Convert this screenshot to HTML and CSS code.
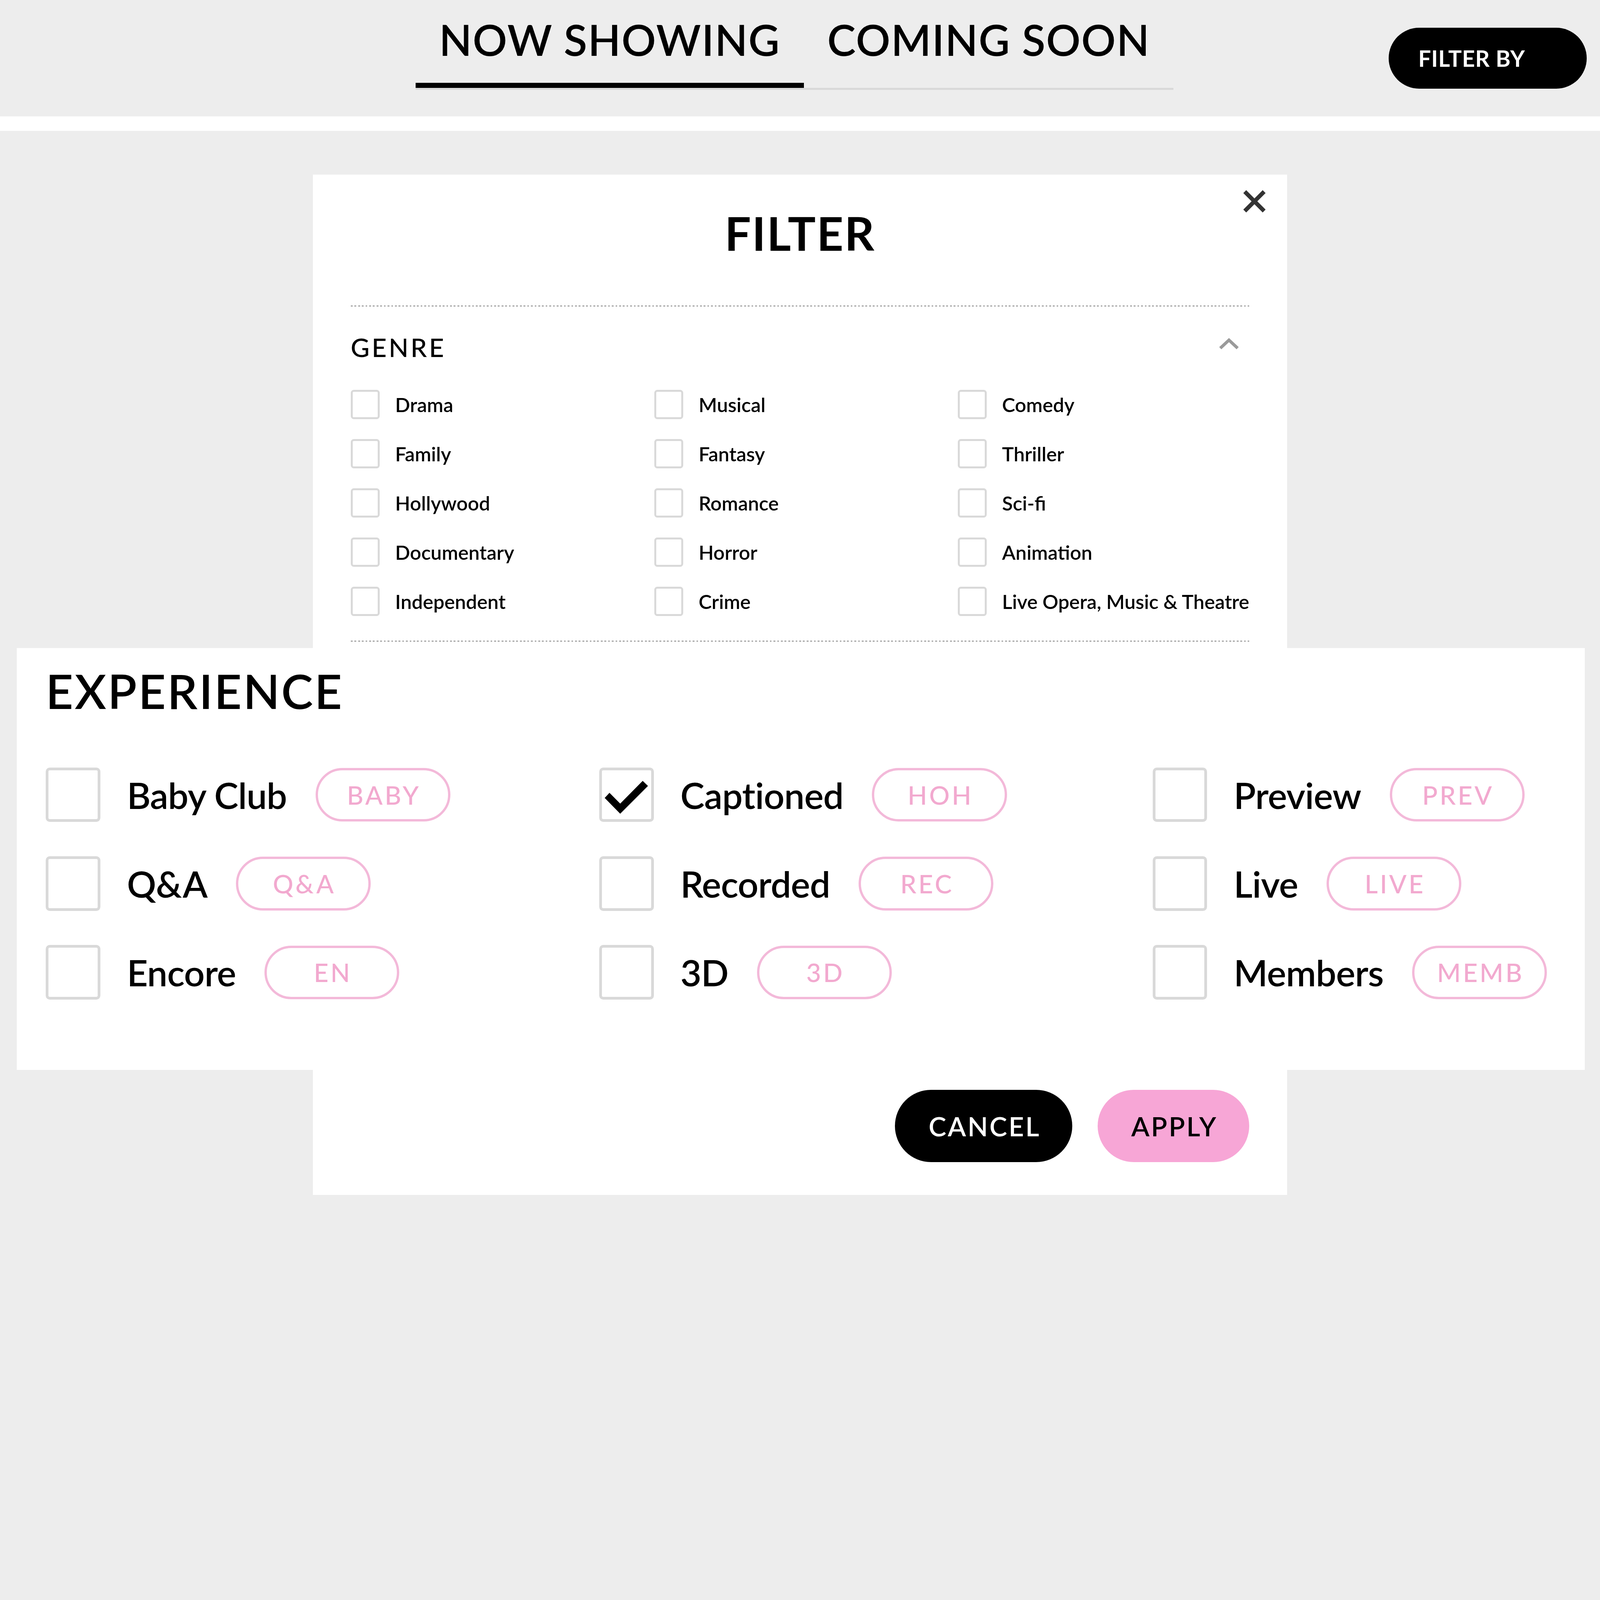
FILE: index.html
```html
<!DOCTYPE html>
<html lang="en">
<head>
  <meta charset="UTF-8">
  <meta name="viewport" content="width=device-width, initial-scale=1.0">
  <title>Filter - Now Showing</title>
  <link rel="stylesheet" href="styles.css">
  <script>
    // the layout is drawn for a 1567px wide frame, scale it to the window
    document.documentElement.style.zoom = window.innerWidth / 1567;
  </script>
</head>
<body>
  <header class="topbar">
    <nav class="tabs">
      <a class="tab active" href="#">NOW SHOWING</a>
      <a class="tab" href="#">COMING SOON</a>
    </nav>
    <button class="filter-by">FILTER BY</button>
  </header>
  <div class="strip"></div>

  <main class="stage">
    <section class="modal">
      <button class="close" aria-label="Close">
        <svg viewBox="0 0 24 24" width="24" height="24"><path d="M2.5 2.5 21.5 21.5M21.5 2.5 2.5 21.5" stroke="#333" stroke-width="4" fill="none"/></svg>
      </button>
      <h1 class="modal-title">FILTER</h1>

      <div class="group">
        <div class="group-head">
          <h2>GENRE</h2>
          <svg class="chevron" viewBox="0 0 20 12" width="20" height="12"><path d="M1.5 10.5 10 2.5 18.5 10.5" stroke="#9a9a9a" stroke-width="3" fill="none"/></svg>
        </div>
        <ul class="genre-list">
          <li><span class="box"></span>Drama</li>
          <li><span class="box"></span>Musical</li>
          <li><span class="box"></span>Comedy</li>
          <li><span class="box"></span>Family</li>
          <li><span class="box"></span>Fantasy</li>
          <li><span class="box"></span>Thriller</li>
          <li><span class="box"></span>Hollywood</li>
          <li><span class="box"></span>Romance</li>
          <li><span class="box"></span>Sci-fi</li>
          <li><span class="box"></span>Documentary</li>
          <li><span class="box"></span>Horror</li>
          <li><span class="box"></span>Animation</li>
          <li><span class="box"></span>Independent</li>
          <li><span class="box"></span>Crime</li>
          <li><span class="box"></span>Live Opera, Music &amp; Theatre</li>
        </ul>
      </div>
      <div class="group group-hidden"></div>

      <div class="actions">
        <button class="btn cancel">CANCEL</button>
        <button class="btn apply">APPLY</button>
      </div>
    </section>

    <section class="experience">
      <h2 class="exp-title">EXPERIENCE</h2>
      <ul class="exp-list">
        <li><span class="box big"></span><span class="exp-label">Baby Club</span><span class="pill">BABY</span></li>
        <li><span class="box big checked"><svg viewBox="5 13.3 42.4 32.2" width="42.4" height="32.2"><path d="M5 30 9.7 25 20.2 35.6 42.2 13.3 47.4 18.3 20.2 45.5Z" fill="#000"/></svg></span><span class="exp-label">Captioned</span><span class="pill">HOH</span></li>
        <li><span class="box big"></span><span class="exp-label">Preview</span><span class="pill">PREV</span></li>
        <li><span class="box big"></span><span class="exp-label">Q&amp;A</span><span class="pill">Q&amp;A</span></li>
        <li><span class="box big"></span><span class="exp-label">Recorded</span><span class="pill">REC</span></li>
        <li><span class="box big"></span><span class="exp-label">Live</span><span class="pill">LIVE</span></li>
        <li><span class="box big"></span><span class="exp-label">Encore</span><span class="pill">EN</span></li>
        <li><span class="box big"></span><span class="exp-label">3D</span><span class="pill">3D</span></li>
        <li><span class="box big"></span><span class="exp-label">Members</span><span class="pill">MEMB</span></li>
      </ul>
    </section>
  </main>
</body>
</html>
```

FILE: styles.css
```css
    * {
      margin: 0;
      padding: 0;
      box-sizing: border-box;
    }

    html {
      background: #ededed;
      overflow: hidden;
    }

    body {
      font-family: Lato, "Noto Sans", sans-serif;
      color: #000;
    }

    button {
      font-family: inherit;
      border: none;
      cursor: pointer;
    }

    ul {
      list-style: none;
    }

    /* top bar */
    .topbar {
      display: flex;
      align-items: flex-start;
      height: 114px;
      padding: 0 13px 0 407px;
    }

    .tabs {
      display: flex;
      border-bottom: 2px solid #d9d9d9;
    }

    .tab {
      display: block;
      padding: 0 23px 4px;
      line-height: 77px;
      font-size: 42px;
      font-weight: 600;
      letter-spacing: 0.7px;
      color: #000;
      text-decoration: none;
      white-space: nowrap;
      border-bottom: 5px solid transparent;
    }

    .tab.active {
      border-bottom-color: #000;
    }

    .filter-by {
      margin: 27px 0 0 auto;
      width: 194px;
      height: 60px;
      padding-left: 29px;
      text-align: left;
      border-radius: 30px;
      background: #000;
      color: #fff;
      font-size: 22px;
      line-height: 59px;
      font-weight: 700;
      letter-spacing: 0.3px;
    }

    .strip {
      height: 14px;
      background: #fff;
    }

    /* modal */
    .stage {
      position: relative;
      height: 1066px;
      padding-top: 43px;
    }

    .modal {
      position: relative;
      width: 954px;
      margin: 0 auto;
      padding: 27px 37px 32px;
      background: #fff;
    }

    .close {
      position: absolute;
      top: 14px;
      right: 20px;
      width: 24px;
      height: 24px;
      background: none;
      display: flex;
    }

    .modal-title {
      text-align: center;
      font-size: 45.5px;
      line-height: 60px;
      font-weight: 700;
      letter-spacing: 1px;
      margin-bottom: 41px;
    }

    .group {
      padding: 21px 0 24px;
      background: repeating-linear-gradient(to right, #9a9a9a 0 1.8px, transparent 1.8px 3.6px) top left / 100% 1px no-repeat;
    }

    .group-hidden {
      height: 440px;
      padding: 0;
    }

    .group-head {
      display: flex;
      align-items: center;
      justify-content: space-between;
      height: 40px;
    }

    .group-head h2 {
      font-size: 25.4px;
      line-height: 40px;
      font-weight: 500;
      letter-spacing: 2px;
    }

    .chevron {
      margin: 0 10px 7px 0;
    }

    .genre-list {
      display: grid;
      grid-template-columns: repeat(3, 1fr);
      column-gap: 18px;
      row-gap: 19.7px;
      margin-top: 22px;
    }

    .genre-list li {
      display: flex;
      align-items: center;
      gap: 15px;
      font-size: 19.3px;
      font-weight: 600;
      white-space: nowrap;
    }

    .box {
      flex: none;
      width: 28.5px;
      height: 28.5px;
      border: 2px solid #d9d9d9;
      border-radius: 3px;
      background: #fff;
    }

    .actions {
      display: flex;
      justify-content: flex-end;
      gap: 24.7px;
    }

    .btn {
      height: 71px;
      padding: 0 31px 0 33px;
      border-radius: 36px;
      font-size: 26px;
      font-weight: 600;
      letter-spacing: 1.5px;
    }

    .cancel {
      background: #000;
      color: #fff;
    }

    .apply {
      background: #f7a6d6;
      color: #000;
    }

    /* experience callout, laid over the modal */
    .experience {
      position: absolute;
      left: 16.5px;
      top: 506.6px;
      width: 1535.5px;
      height: 413.4px;
      padding: 12px 0 0 28.3px;
      background: #fff;
    }

    .exp-title {
      font-size: 46.8px;
      line-height: 60px;
      font-weight: 600;
      letter-spacing: 1.4px;
    }

    .exp-list {
      display: grid;
      grid-template-columns: 542px 542px 1fr;
      row-gap: 33.5px;
      margin-top: 45px;
    }

    .exp-list li {
      display: flex;
      align-items: center;
    }

    .box.big {
      width: 53.5px;
      height: 53.5px;
      border-width: 3px;
      border-radius: 4px;
    }

    .box.checked {
      display: flex;
      align-items: center;
      justify-content: center;
      padding-top: 5px;
    }

    .exp-label {
      margin: 0 28px 0 26px;
      font-size: 35.6px;
      font-weight: 600;
      letter-spacing: -0.3px;
    }

    .pill {
      display: flex;
      align-items: center;
      justify-content: center;
      width: 132px;
      height: 52.5px;
      padding-left: 2px;
      border: 2.5px solid #f3b9d9;
      border-radius: 27px;
      color: #f2a9cf;
      font-size: 25px;
      font-weight: 500;
      letter-spacing: 2px;
    }
```
